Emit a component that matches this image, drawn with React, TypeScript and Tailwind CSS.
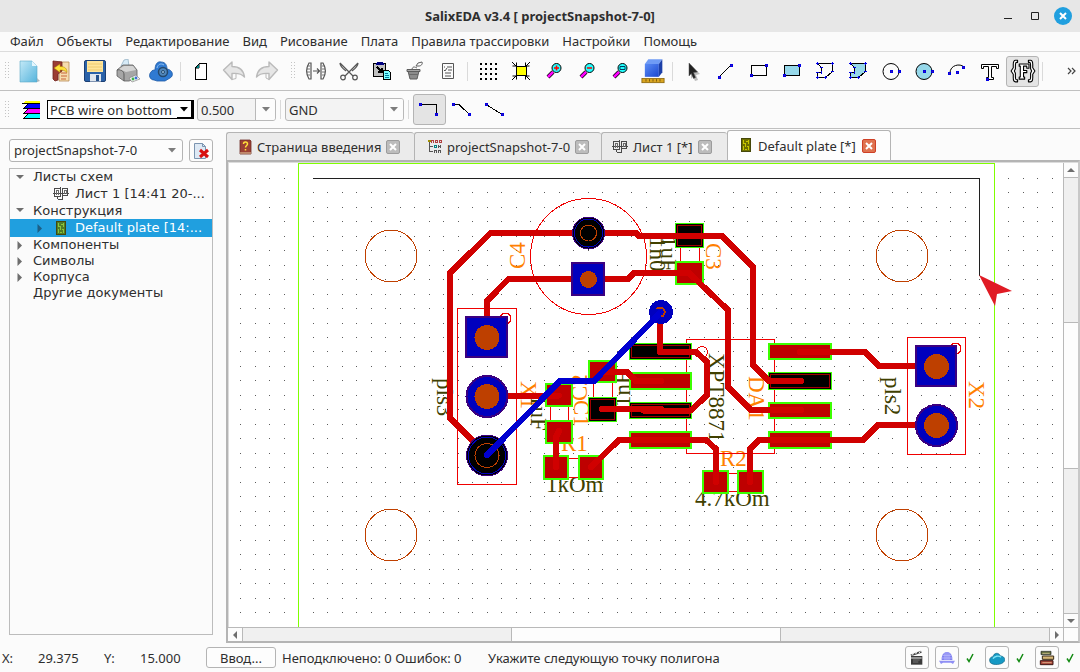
import type { ReactNode } from "react";

const menu = [
  "Файл",
  "Объекты",
  "Редактирование",
  "Вид",
  "Рисование",
  "Плата",
  "Правила трассировки",
  "Настройки",
  "Помощь",
];

function Icon({ children, size = 24 }: { children: ReactNode; size?: number }) {
  return (
    <svg
      width={size}
      height={size}
      viewBox="0 0 24 24"
      fill="none"
      aria-hidden="true"
      className="shrink-0"
    >
      {children}
    </svg>
  );
}

// blue square handle used by the drawing tools
function Node({ x, y }: { x: number; y: number }) {
  return (
    <g shapeRendering="crispEdges">
      <rect x={x - 1} y={y - 1} width="3" height="3" fill="#0000e6" />
      <rect x={x} y={y} width="1" height="1" fill="#5a1090" />
    </g>
  );
}

const newFile = (
  <Icon>
    <path d="M3 2h12l5 5v16H3z" fill="url(#gFile)" stroke="#5aa7c8" strokeWidth=".6" />
    <path d="M15 2v5h5z" fill="#e4f6fd" />
    <path d="M20 19l3 3-3 1z" fill="#a9b8bd" />
  </Icon>
);

const openBook = (
  <Icon>
    <path d="M9 3h10v19H9z" fill="#f6dcae" stroke="#b98a55" strokeWidth=".8" />
    <path d="M3 2l9 1v9l-4 3v6l-3 1-2-2z" fill="#9b3c33" stroke="#6f221d" strokeWidth=".8" />
    <path d="M11 14h6M11 17h6M11 20h5" stroke="#c8663a" />
    <path d="M4 9l6-4v2.500c5 0 7 2 7 6-2-2-4-2.500-7-2.500v2.500z" fill="#ffe13a" stroke="#a67c00" strokeWidth=".5" />
  </Icon>
);

const save = (
  <Icon>
    <rect x="1.500" y="1.500" width="21" height="21" rx="1.500" fill="#2b62a8" stroke="#1c3f73" />
    <rect x="4" y="2" width="16" height="11" fill="#ffe59a" />
    <path d="M5 5h14M5 8h14M5 11h14" stroke="#eecb70" />
    <rect x="7" y="15" width="11" height="7.500" fill="#dfe6ee" />
    <rect x="13" y="16" width="3" height="6" fill="#24518c" />
  </Icon>
);

const print = (
  <Icon>
    <path d="M5 7L8 1l4-1 1 7z" fill="#d7ebf8" stroke="#8aa9bd" strokeWidth=".7" />
    <path d="M1 11l6-5 10 0 4 5v8l-8 3H8l-7-5z" fill="#a6a6a6" stroke="#5c5c5c" strokeWidth=".8" />
    <path d="M1 11c4-1 7 1 7 5v6" stroke="#5c5c5c" />
    <path d="M3 10l5-3 9 0 3 4-10 2z" fill="#d4d4d4" />
    <path d="M13 19l7-3 4 4-8 3z" fill="#f3f3f3" stroke="#777" strokeWidth=".6" />
    <circle cx="17" cy="20" r="1.400" fill="#3db54a" />
    <circle cx="20" cy="19" r="1.400" fill="#3b6fd4" />
  </Icon>
);

const cloud = (
  <Icon>
    <path
      d="M5 21C1 21-1 16 2 13c1-2 3-2 4-2 0-5 2-9 6-8 5 0 6 4 6 7 6 1 7 7 3 9l-5 3H8z"
      fill="#2f7ad2"
      stroke="#1f5ba6"
      strokeWidth=".8"
    />
    <path d="M8 9c1-4 4-5 7-3" stroke="#8fc0f2" />
    <circle cx="14" cy="13" r="4.500" fill="#4f87bd" stroke="#24496e" strokeWidth="1.500" />
    <circle cx="14" cy="13" r="1.500" fill="#9cc4e6" stroke="#24496e" />
  </Icon>
);

const blankPage = (
  <Icon>
    <g shapeRendering="crispEdges">
      <path d="M10.500 4.500h7v16h-11v-12z" fill="#fff" stroke="#000" />
      <path d="M7 8l3-3v4H7z" fill="#008080" stroke="#000" strokeWidth=".5" />
    </g>
  </Icon>
);

const undo = (
  <Icon>
    <path
      d="M1.500 11L10 3v4.500c7 0 11.500 3.500 12.500 10.500-3-3.500-7-4-12.500-3.500v6z"
      fill="#e6e6e6"
      stroke="#bababa"
      strokeWidth="1.400"
      strokeLinejoin="round"
    />
    <path d="M10 20.500l4-1v-5" stroke="#bababa" />
  </Icon>
);

const redo = (
  <Icon>
    <path
      d="M22.500 11L14 3v4.500C7 7.500 2.500 11 1.500 18c3-3.500 7-4 12.500-3.500v6z"
      fill="#e6e6e6"
      stroke="#bababa"
      strokeWidth="1.400"
      strokeLinejoin="round"
    />
    <path d="M14 20.500l-3-1.500v-4" stroke="#bababa" />
  </Icon>
);

const mirror = (
  <Icon>
    <g stroke="#555" strokeWidth="1.200">
      <path d="M7 4v16H5C2 15 2 9 5 4zM17 4v16h2c3-5 3-11 0-16z" />
      <path d="M3 7h3M3 10h3M3 13h3M3 16h3M18 7h3M18 10h3M18 13h3M18 16h3" strokeWidth=".8" />
      <path d="M9 12h6M13 9.500l2.500 2.500-2.500 2.500" />
    </g>
  </Icon>
);

const cut = (
  <Icon>
    <g stroke="#555" strokeWidth="1.200">
      <path d="M3 4l13 13M21 4L8 17M3 4c0 3 2 5 6 8M21 4c0 3-2 5-6 8" />
      <circle cx="6" cy="18.500" r="2.300" />
      <circle cx="18" cy="18.500" r="2.300" />
    </g>
  </Icon>
);

const paste = (
  <Icon>
    <g shapeRendering="crispEdges">
      <rect x="3.500" y="4.500" width="12" height="13" fill="#c0c0c0" stroke="#000" />
      <path d="M6 5V4h1V3h5v1h1v1z" fill="#000080" stroke="#000080" />
      <path d="M7 8l5 5M12 9v4H8" stroke="#000" strokeWidth="1.500" />
      <path d="M13.500 11.500h5l2 2v7h-7z" fill="#7fffff" stroke="#000" />
      <path d="M15 14h3M15 16h4M15 18h4" stroke="#0080a0" />
    </g>
  </Icon>
);

const bucket = (
  <Icon>
    <path d="M5 12h11l-2 8H7z" fill="#8c8c8c" stroke="#5d5d5d" />
    <path d="M4 10.500h13v2H4z" fill="#a8a8a8" stroke="#5d5d5d" />
    <path d="M9 10c1-3 3-2 5-1M13 7l2-3 4-1c1 2-1 4-3 4z" stroke="#5d5d5d" />
    <path d="M6 15.500h9" stroke="#6a6a6a" />
  </Icon>
);

const checklist = (
  <Icon>
    <g stroke="#555">
      <path d="M6.500 4.500h11v15h-11z" />
      <path d="M8 8h1M8 11l1 1 2-3M11 8h5M12 11h4M9 14h6M9 17h6" />
    </g>
  </Icon>
);

const gridDots = (
  <Icon>
    <path
      d="M4 5h2M9 5h2M14 5h2M19 5h2M4 10h2M9 10h2M14 10h2M19 10h2M4 15h2M9 15h2M14 15h2M19 15h2M4 20h2M9 20h2M14 20h2M19 20h2"
      stroke="#000"
      strokeWidth="2"
      shapeRendering="crispEdges"
    />
  </Icon>
);

const fit = (
  <Icon>
    <g stroke="#000">
      <path d="M3 3l4 4M21 3l-4 4M3 21l4-4M21 21l-4-4M3.500 7h4V3.500M20.500 7h-4V3.500M3.500 17h4v3.500M20.500 17h-4v3.500" />
      <rect x="7.500" y="7.500" width="10" height="9" fill="#ff0" />
    </g>
  </Icon>
);

function Lens({ mark }: { mark: ReactNode }) {
  return (
    <Icon>
      <path d="M6 18l5-5" stroke="#000" strokeWidth="4" />
      <path d="M6 18l5-5" stroke="#f0f" strokeWidth="2.500" />
      <circle cx="14.500" cy="9" r="4.500" fill="#2ff" stroke="#000" />
      {mark}
    </Icon>
  );
}

const cube = (
  <Icon size={28}>
    <path d="M5 6l3-4h12l-3 4z" fill="#6f9bf5" />
    <path d="M5 6h12v11H5z" fill="url(#gCube)" />
    <path d="M17 6l3-4v11l-3 4z" fill="#1c3fa8" />
    <rect x="2.500" y="18.500" width="19" height="3.500" fill="#d9a520" stroke="#8a6408" strokeWidth=".7" />
    <path d="M6 19v2M9 19v2M12 19v2M15 19v2M18 19v2" stroke="#6b4d05" strokeWidth=".7" />
  </Icon>
);

const arrowTool = (
  <Icon>
    <path d="M10 6l9 9-4 1 2 5-3 1-2-5-2 3z" fill="#bbb" />
    <path d="M8 4l8.500 9-4 .5 2 5-2 1-2.200-5L8 17z" fill="#222" stroke="#555" strokeWidth=".5" />
  </Icon>
);

const lineTool = (
  <Icon>
    <path d="M5 18L17 6" stroke="#000" shapeRendering="crispEdges" />
    <Node x={5} y={18} />
    <Node x={17} y={6} />
  </Icon>
);

function RectTool({ fill }: { fill?: string }) {
  return (
    <Icon>
      <rect x="4.500" y="6.500" width="15" height="10" fill={fill ?? "none"} stroke="#000" shapeRendering="crispEdges" />
      <Node x={4} y={16} />
      <Node x={19} y={6} />
    </Icon>
  );
}

function PolyTool({ fill }: { fill?: string }) {
  return (
    <Icon>
      <path
        d="M4.500 4.500h15v8l-7 6h-8v-5h4v-5z"
        fill={fill ?? "none"}
        stroke="#000"
        shapeRendering="crispEdges"
      />
      <path
        d="M3 4.500h3M4.500 3v3M18 4.500h3M19.500 3v3M18 12h3M12.500 17v3M11 18.500h3M3 18.500h3M4.500 17v3M3 13.500h3M8.500 12v3M7 8.500h3"
        stroke="#0000e6"
        shapeRendering="crispEdges"
      />
    </Icon>
  );
}

function CircleTool({ fill }: { fill?: string }) {
  return (
    <Icon>
      <circle cx="12" cy="12.500" r="8" fill={fill ?? "none"} stroke="#000" />
      <Node x={12} y={12} />
      <Node x={20} y={12} />
    </Icon>
  );
}

const arcTool = (
  <Icon>
    <path d="M5 14c0-8 10-10 14-6" stroke="#000" />
    <Node x={4} y={14} />
    <Node x={12} y={13} />
    <Node x={18} y={8} />
  </Icon>
);

const textTool = (
  <Icon>
    <path d="M3.500 5.500h17v4h-2v-2h-5v11h2v2h-7v-2h2v-11h-5v2h-2z" fill="#fff" stroke="#000" />
    <Node x={9} y={20} />
  </Icon>
);

const fieldTool = (
  <Icon size={26}>
    <g stroke="#000" fill="#fff" strokeLinejoin="round">
      <path d="M7 2H5C3 2 3 4 3 6v3l-2 3 2 3v3c0 2 0 4 2 4h2v-2H6c-1 0-1-1-1-3v-3l-1-2 1-2V7c0-2 0-3 1-3h1z" />
      <path d="M17 2h2c2 0 2 2 2 4v3l2 3-2 3v3c0 2 0 4-2 4h-2v-2h1c1 0 1-1 1-3v-3l1-2-1-2V7c0-2 0-3-1-3h-1z" />
      <path d="M8.500 5.500h9v4h-2v-2h-3v4h3v2h-3v4h1v2h-5v-2h1v-10h-1z" />
    </g>
  </Icon>
);

const magPlus = <path d="M12 9h5M14.500 6.500v5" stroke="#f00" strokeWidth="1.500" />;
const magMinus = <path d="M12 9h5" stroke="#f00" strokeWidth="1.500" />;
const magRect = <path d="M12 7.500h5v3h-5z" stroke="#004060" />;

type Tool = { label: string; icon: ReactNode; on?: boolean } | "sep" | "grip";

const tools: Tool[] = [
  { label: "Новый", icon: newFile },
  { label: "Открыть", icon: openBook },
  { label: "Сохранить", icon: save },
  { label: "Печать", icon: print },
  { label: "Облако", icon: cloud },
  "sep",
  { label: "Страница", icon: blankPage },
  { label: "Отменить", icon: undo },
  { label: "Повторить", icon: redo },
  "grip",
  { label: "Отразить", icon: mirror },
  { label: "Вырезать", icon: cut },
  { label: "Вставить", icon: paste },
  { label: "Очистить", icon: bucket },
  { label: "Свойства", icon: checklist },
  "sep",
  { label: "Сетка", icon: gridDots },
  { label: "Вписать", icon: fit },
  { label: "Увеличить", icon: <Lens mark={magPlus} /> },
  { label: "Уменьшить", icon: <Lens mark={magMinus} /> },
  { label: "Область", icon: <Lens mark={magRect} /> },
  { label: "3D вид", icon: cube },
  "sep",
  { label: "Выбор", icon: arrowTool },
  { label: "Линия", icon: lineTool },
  { label: "Прямоугольник", icon: <RectTool /> },
  { label: "Закрашенный прямоугольник", icon: <RectTool fill="#96d8ea" /> },
  { label: "Полигон", icon: <PolyTool /> },
  { label: "Закрашенный полигон", icon: <PolyTool fill="#96d8ea" /> },
  { label: "Окружность", icon: <CircleTool /> },
  { label: "Круг", icon: <CircleTool fill="#96d8ea" /> },
  { label: "Дуга", icon: arcTool },
  { label: "Текст", icon: textTool },
  { label: "Поле", icon: fieldTool, on: true },
  "sep",
];

function Grip() {
  return (
    <svg width="5" height="18" aria-hidden="true" className="shrink-0" shapeRendering="crispEdges">
      <path d="M.5 0v18M3.500 0v18" stroke="#c4c4c4" strokeDasharray="1 2" />
    </svg>
  );
}

function ToolButton({ label, icon, on }: { label: string; icon: ReactNode; on?: boolean }) {
  return (
    <button
      type="button"
      aria-label={label}
      aria-pressed={on}
      className={
        on
          ? "flex h-[31px] w-[33px] shrink-0 items-center justify-center rounded-[3px] border border-[#b4b4b4] bg-[#e4e4e4]"
          : "flex h-[31px] w-[33px] shrink-0 items-center justify-center"
      }
    >
      {icon}
    </button>
  );
}

function Down() {
  return (
    <svg width="8" height="5" viewBox="0 0 8 5" aria-hidden="true" className="shrink-0">
      <path d="M0 0h8L4 4.500z" fill="#7d7d7d" />
    </svg>
  );
}

function EditCombo({ label, value, className }: { label: string; value: string; className: string }) {
  return (
    <div className={`flex h-[23px] overflow-hidden rounded-[3px] border border-[#b9b9b9] bg-[#f3f3f3] ${className}`}>
      <input aria-label={label} defaultValue={value} className="min-w-0 flex-1 bg-transparent px-[3px] outline-none" />
      <button
        type="button"
        aria-label="Список"
        className="flex w-[20px] items-center justify-center border-l border-[#b9b9b9] bg-[#fcfcfc]"
      >
        <Down />
      </button>
    </div>
  );
}

const wires = [
  { label: "Под прямым углом", d: "M2 6.500h16.500V17", ends: [[2, 6], [18, 16]], on: true },
  { label: "Под углом 45", d: "M2 6.500h6L19 17", ends: [[2, 6], [18, 16]] },
  { label: "Произвольно", d: "M2 6.500L19 17", ends: [[2, 6], [18, 16]] },
];

function SheetIcon() {
  return (
    <svg
      width="16"
      height="15"
      viewBox="0 0 16 15"
      fill="none"
      stroke="#4a4a4a"
      aria-hidden="true"
      className="shrink-0"
      shapeRendering="crispEdges"
    >
      <path d="M1.500 2.500h6v8h-6zM9.500 2.500h5v7h-5zM0 7.500h16M7.500 3V.500M4.500 10v3M4.500 13.500h5M9.500 13v-3" />
      <path d="M3.500 5v4M5.500 5v4M3 4.500h3M11.500 5v3M13.500 5v3M11 4.500h3" stroke="#6a6a6a" />
    </svg>
  );
}

function PlateIcon({ color, base }: { color: string; base: string }) {
  return (
    <svg
      width="11"
      height="15"
      viewBox="0 0 11 15"
      fill="none"
      aria-hidden="true"
      className="shrink-0"
      shapeRendering="crispEdges"
    >
      <rect x=".5" y=".5" width="9" height="13" fill={base} stroke="#45480a" />
      <path d="M2.500 2v4M2 5.500h3M4.500 5v4M7.500 2v4M5 3.500h2M2.500 8v4M7.500 8v4M4 11.500h2M6 8.500h2" stroke={color} />
    </svg>
  );
}

function HelpIcon() {
  return (
    <svg width="13" height="16" viewBox="0 0 13 16" fill="none" aria-hidden="true" className="shrink-0">
      <path d="M1 1h10l1 1v13H1z" fill="#9c4034" stroke="#6c2b23" strokeWidth=".8" />
      <path d="M1 14h11" stroke="#e8d2a5" />
      <path d="M4.500 5c0-3 4-2.500 4 0 0 1.500-2 1.500-2 3.500M6.500 10v1.500" stroke="#ffe13a" strokeWidth="1.500" />
    </svg>
  );
}

function ProjectIcon() {
  return (
    <svg
      width="15"
      height="15"
      viewBox="0 0 15 15"
      fill="none"
      aria-hidden="true"
      className="shrink-0"
      shapeRendering="crispEdges"
    >
      <path d="M2.500 3v10M3 7.500h3M3 12.500h3" stroke="#555" />
      <path d="M4.500 4V1.500h2V4M8.500 4V1.500h2v2h-2M12.500 1.500h2v2h-2z" stroke="#b04040" />
      <path d="M7.500 6.500h2v2h-2z" stroke="#008080" />
      <path d="M11.500 6v3M13.500 6v3M11.500 7.500h2" stroke="#555" />
      <path d="M7.500 14v-2.500h2V14M11.500 14v-2.500h2V14" stroke="#555" />
      <path d="M1 1h3v2H1z" fill="#a09000" />
    </svg>
  );
}

const tabs = [
  { title: "Страница введения", icon: <HelpIcon />, className: "w-[188px] pl-[12px]" },
  { title: "projectSnapshot-7-0", icon: <ProjectIcon />, className: "w-[187px] pl-[12px]" },
  { title: "Лист 1 [*]", icon: <SheetIcon />, className: "w-[126px] pl-[10px]" },
];

function CloseTab({ active }: { active?: boolean }) {
  return (
    <button
      type="button"
      aria-label="Закрыть вкладку"
      className={
        active
          ? "flex h-[14px] w-[14px] shrink-0 items-center justify-center rounded-[2px] border border-[#cf4026] bg-[#df7350]"
          : "flex h-[14px] w-[14px] shrink-0 items-center justify-center rounded-[2px] border border-[#9c9c9c] bg-[#bcbcbc]"
      }
    >
      <svg width="8" height="8" viewBox="0 0 8 8" aria-hidden="true">
        <path d="M1 1l6 6M7 1L1 7" stroke="#fff" strokeWidth="2" />
      </svg>
    </button>
  );
}

const RED = "#d00000";

const traces = [
  "M588 233H490.500L450 273V418L487 455",
  "M588 233H636L639 236H722L753 267V365L769 381H801",
  "M588 279H508.500L487 301V337",
  "M588 279H628L634 273H689L728 310V387L751 410H801",
  "M487 395.500H559",
  "M559 431L556 437V467",
  "M602 372H627L636 381H661",
  "M602 409H661",
  "M643 410.500H691L707 395V362L696 352H660V312",
  "M591 467L619 440H706L716 449V482",
  "M750 482V449L759 440H863L878 425H936",
  "M800 352H865L879 366H936",
];

// x, y, width, height, filled with copper or masked
const pads: [number, number, number, number, boolean][] = [
  [629, 343, 63, 17, false],
  [629, 372, 63, 18, true],
  [629, 402, 63, 17, false],
  [629, 431, 63, 18, true],
  [768, 343, 64, 17, true],
  [768, 372, 64, 18, false],
  [768, 402, 64, 17, true],
  [768, 431, 64, 18, true],
  [675, 223, 29, 25, false],
  [675, 261, 29, 24, true],
  [588, 360, 29, 23, true],
  [588, 397, 29, 25, false],
  [545, 383, 28, 24, true],
  [545, 420, 28, 24, true],
  [543, 455, 26, 25, true],
  [578, 455, 26, 25, true],
  [702, 470, 27, 24, true],
  [737, 470, 27, 24, true],
];

// text, x, y, angle, layer colour
const marks: [string, number, number, number, string][] = [
  ["C4", 525, 269, -90, "#ff8000"],
  ["C3", 706, 243, 90, "#ff8000"],
  ["DA1", 749, 376, 90, "#ff8000"],
  ["X2", 969, 381, 90, "#ff8000"],
  ["X1", 521, 381, 90, "#ff8000"],
  ["C2", 587, 401, -90, "#ff8000"],
  ["C1", 574, 400, 90, "#ff8000"],
  ["R1", 561, 451, 0, "#ff8000"],
  ["R2", 720, 466, 0, "#ff8000"],
  ["XPT8871", 709, 353, 90, "#404000"],
  ["pls2", 885, 377, 90, "#404000"],
  ["pls3", 437, 378, 90, "#404000"],
  ["1uF", 531, 395, 90, "#404000"],
  ["1nF", 630, 407, -90, "#404000"],
  ["1n0", 650, 237, 90, "#404000"],
  ["1uF", 661, 236, 90, "#404000"],
  ["1kOm", 546, 492, 0, "#404000"],
  ["4.7kOm", 695, 506, 0, "#404000"],
];

let dots = "";
for (let i = 0; i < 140; i++) {
  for (let j = 0; j < 80; j++) {
    dots += `M${Math.round(240.2 + 14.49 * i)} ${Math.round(177.6 + 14.49 * j)}h1v1h-1z`;
  }
}

function Board() {
  return (
    <svg
      role="img"
      aria-label="Печатная плата"
      className="absolute inset-0 h-full w-full"
      fill="none"
      shapeRendering="crispEdges"
    >
      <g transform="translate(-229 -163)">
        <path d={dots} fill="#5c5c5c" />
        <path d="M298.500 2000V163.500H994.500V2000" stroke="#80ff00" />
        <path d="M313 178.500H979.500V276" stroke="#202020" />

        <g stroke="#c04000">
          <circle cx="391" cy="256" r="26" />
          <circle cx="902" cy="256" r="26" />
          <circle cx="391" cy="535" r="26" />
          <circle cx="902" cy="535" r="26" />
        </g>

        <g fontFamily="'Liberation Serif', serif" fontSize="23">
          {marks.map(([text, x, y, angle, color]) => (
            <text key={text + x} transform={`translate(${x} ${y}) rotate(${angle})`} fill={color}>
              {text}
            </text>
          ))}
        </g>

        <g stroke="#f00000">
          <circle cx="588.5" cy="256.5" r="58" />
          <rect x="457.5" y="308.5" width="59" height="176" />
          <rect x="907.5" y="337.5" width="58" height="117" />
          <rect x="686.5" y="339.5" width="88" height="114" />
          <circle cx="505.5" cy="318.5" r="5.500" />
          <circle cx="955.5" cy="348.5" r="5.500" />
          <circle cx="702" cy="352" r="5.500" />
          <path d="M680.500 247v15M699.500 247v15M593.500 382v16M612.500 382v16M550.500 406v15M568.500 406v15" />
          <path d="M568 458.500h11M568 477.500h11M728 473.500h10M728 491.500h10" />
        </g>

        {pads.map(([x, y, w, h, copper]) => (
          <g key={`${x}-${y}`}>
            {copper ? (
              <rect x={x + 1} y={y + 1} width={w - 2} height={h - 2} fill="#be0000" stroke="#3cff00" strokeWidth="2" />
            ) : (
              <>
                <rect x={x + 0.5} y={y + 0.5} width={w - 1} height={h - 1} fill="#000" stroke="#3cff00" />
                <rect x={x + 2.5} y={y + 2.5} width={w - 5} height={h - 5} stroke="#a00000" />
              </>
            )}
          </g>
        ))}

        <g stroke={RED} strokeWidth="6" strokeLinecap="round" strokeLinejoin="round">
          {traces.map((d) => (
            <path key={d} d={d} />
          ))}
        </g>

        <g fill="#0000be" stroke="#3c0080" strokeWidth="2">
          <rect x="466" y="317" width="41" height="40" />
          <circle cx="487" cy="396.5" r="20.500" />
          <rect x="572" y="263" width="32" height="32" />
          <rect x="916" y="346" width="40" height="40" />
          <circle cx="936.5" cy="425.5" r="20.500" />
        </g>
        <g fill="#be4000">
          <circle cx="487" cy="337.5" r="12.500" />
          <circle cx="487" cy="396.5" r="12.500" />
          <circle cx="588.5" cy="279.5" r="8.500" />
          <circle cx="936.5" cy="366.5" r="12.500" />
          <circle cx="936.5" cy="425.5" r="12.500" />
        </g>

        <circle cx="487" cy="455.500" r="20.500" fill="#000" stroke="#3c0080" />
        <circle cx="487" cy="455.500" r="18.500" stroke="#0000be" />
        <circle cx="487" cy="455.500" r="12" stroke="#be4000" />
        <circle cx="588.500" cy="233" r="16" fill="#000" stroke="#3c0080" />
        <circle cx="588.500" cy="233" r="14" stroke="#0000be" />
        <circle cx="588.500" cy="233" r="8" stroke="#be4000" />

        <circle cx="661" cy="312" r="12" fill="#0000be" />
        <path
          d="M487 455L560 381H594L661 312"
          stroke="#0000d0"
          strokeWidth="6"
          strokeLinecap="round"
          strokeLinejoin="round"
        />
        <path d="M657 309a4.500 4.500 0 1 1 4 7.500" stroke="#be4000" strokeWidth="2" />

        <path d="M979 275L1012 291L997 294L995 306Z" fill="#e01b24" shapeRendering="geometricPrecision" />
      </g>
    </svg>
  );
}

const triangles = {
  up: "M0 6h8L4 2z",
  down: "M0 2h8L4 6z",
  left: "M6 0v8L2 4z",
  right: "M2 0v8l4-4z",
};

function ScrollArrow({ dir, className }: { dir: keyof typeof triangles; className: string }) {
  return (
    <button type="button" aria-label="Прокрутка" className={`flex shrink-0 items-center justify-center bg-[#fcfcfc] ${className}`}>
      <svg width="8" height="8" viewBox="0 0 8 8" aria-hidden="true">
        <path d={triangles[dir]} fill="#6e6e6e" />
      </svg>
    </button>
  );
}

type TreeRow = { text: string; pad: string; open?: boolean; leaf?: boolean; icon?: ReactNode; on?: boolean };

const tree: TreeRow[] = [
  { text: "Листы схем", pad: "h-[16px] pl-[5px]", open: true },
  { text: "Лист 1 [14:41 20-...", pad: "h-[17px] pl-[25px]", leaf: true, icon: <SheetIcon /> },
  { text: "Конструкция", pad: "h-[17px] pl-[5px]", open: true },
  {
    text: "Default plate [14:...",
    pad: "h-[18px] pl-[25px] bg-[#209fdf] text-white",
    icon: <PlateIcon color="#8cc43c" base="#4f7d28" />,
    on: true,
  },
  { text: "Компоненты", pad: "h-[16px] pl-[5px]" },
  { text: "Символы", pad: "h-[16px] pl-[5px]" },
  { text: "Корпуса", pad: "h-[16px] pl-[5px]" },
  { text: "Другие документы", pad: "h-[16px] pl-[5px]", leaf: true },
];

function Sidebar() {
  return (
    <aside className="flex w-[226px] shrink-0 flex-col pt-[10px] pr-[13px] pb-2 pl-[9px]">
      <div className="flex gap-[6px]">
        <div className="relative flex flex-1">
          <select
            aria-label="Проект"
            className="h-[23px] w-full appearance-none rounded-[3px] border border-[#b4b4b4] bg-[#fcfcfc] pb-px pl-1 outline-none"
          >
            <option>projectSnapshot-7-0</option>
          </select>
          <span className="pointer-events-none absolute top-[9px] right-[7px] flex">
            <Down />
          </span>
        </div>
        <button
          type="button"
          aria-label="Закрыть проект"
          className="flex h-[23px] w-[24px] items-center justify-center rounded-[3px] border border-[#b4b4b4] bg-[#fcfcfc]"
        >
          <svg width="18" height="18" viewBox="0 0 18 18" fill="none" aria-hidden="true">
            <path d="M2.500 1.500h8l3 3v12h-11z" fill="#dde9f5" stroke="#7b94b0" />
            <path d="M10.500 1.500v3h3" stroke="#7b94b0" />
            <path d="M8 8l8 7M16 8l-8 7" stroke="#d81010" strokeWidth="3" />
          </svg>
        </button>
      </div>
      <ul
        role="tree"
        aria-label="Проект"
        className="mt-[6px] flex-1 overflow-hidden border border-[#bcbcbc] font-['DejaVu_Sans',sans-serif] text-[13px]"
      >
        {tree.map((row) => (
          <li key={row.text} role="treeitem" aria-expanded={row.open} aria-selected={!!row.on} className={`flex items-center ${row.pad}`}>
            <span className="flex w-[18px] shrink-0 items-center">
              {!row.leaf && (
                <svg width="9" height="9" viewBox="0 0 9 9" aria-hidden="true">
                  <path d={row.open ? "M1 2h8L5 6z" : "M2.500 0v9L7 4.500z"} fill={row.on ? "#1c5f86" : "#6e6e6e"} />
                </svg>
              )}
            </span>
            {row.icon && <span className="flex w-[22px] shrink-0 justify-center pr-[6px]">{row.icon}</span>}
            <span className="leading-4 whitespace-nowrap">{row.text}</span>
          </li>
        ))}
      </ul>
    </aside>
  );
}

function Editor() {
  return (
    <main className="flex min-w-0 flex-1 flex-col pt-px">
      <div role="tablist" className="flex items-end">
        {tabs.map((tab) => (
          <div
            key={tab.title}
            role="tab"
            aria-selected={false}
            className={`flex h-[28px] shrink-0 items-center gap-[5px] rounded-t-[3px] border border-r-0 border-b-0 border-[#b4b4b4] bg-[#ebebeb] whitespace-nowrap ${tab.className}`}
          >
            {tab.icon}
            {tab.title}
            <CloseTab />
          </div>
        ))}
        <div
          role="tab"
          aria-selected
          className="flex h-[30px] w-[164px] shrink-0 items-center gap-[6px] rounded-t-[3px] border border-b-0 border-[#b4b4b4] bg-[#fdfdfd] pl-[13px] whitespace-nowrap"
        >
          <PlateIcon color="#c8c800" base="#6e7000" />
          Default plate [*]
          <CloseTab active />
        </div>
      </div>

      <div className="flex min-h-0 flex-1 flex-col border-2 border-[#b4b4b4] border-r-[#c8c8c8]">
        <div className="flex min-h-0 flex-1 border-t border-l border-[#dcdcdc] bg-white">
          <div className="relative min-w-0 flex-1 overflow-hidden">
            <Board />
          </div>
          <div className="flex w-[15px] shrink-0 flex-col border-l border-[#b9b9b9] bg-[#f0f0f0]">
            <ScrollArrow dir="up" className="h-[15px] border-b border-[#b9b9b9]" />
            <div className="grow-[145]" />
            <div className="grow-[146] border-y border-[#b9b9b9] bg-[#fdfdfd]" />
            <div className="grow-[145]" />
            <ScrollArrow dir="down" className="h-[14px] border-t border-[#b9b9b9]" />
          </div>
        </div>
        <div className="flex h-[14px] shrink-0 border-t border-[#b9b9b9] bg-[#f0f0f0]">
          <ScrollArrow dir="left" className="w-[15px] border-r border-[#b9b9b9]" />
          <div className="grow-[269]" />
          <div className="grow-[269] border-x border-[#b9b9b9] bg-[#fdfdfd]" />
          <div className="grow-[269]" />
          <ScrollArrow dir="right" className="w-[14px] border-l border-[#b9b9b9]" />
          <div className="w-[15px] shrink-0 border-l border-[#b9b9b9] bg-[#fcfcfc]" />
        </div>
      </div>
    </main>
  );
}

const services = [
  {
    label: "Видео",
    icon: (
      <>
        <path d="M3 9h17v13H3z" fill="#3a3a3a" />
        <path d="M2 7l16-6 1 3L4 9z" fill="#444" />
        <path d="M5 8l2-4M10 6l2-4M15 5l2-3M3 12h16" stroke="#eee" strokeWidth="1.500" />
        <path d="M6 15h10M6 18h8" stroke="#999" />
      </>
    ),
  },
  {
    label: "Сеть",
    check: true,
    icon: (
      <>
        <path d="M4 15C3-1 21-1 20 15z" fill="#8080f0" />
        <path d="M5 8h14M4 12h16M9 4v11M12 3v12M15 4v11" stroke="#c4c4ff" />
        <path d="M0 16h24l-3 5-3-2H6l-3 2z" fill="#8f8ff5" />
      </>
    ),
  },
  {
    label: "Облачный сервис",
    check: true,
    icon: (
      <>
        <path d="M2 19C-1 13 3 10 6 10c1-6 9-7 11-1 5 0 8 4 6 8-4 6-17 6-21 2z" fill="#1699c4" stroke="#0d6080" />
        <path d="M6 13c2-4 9-5 12-2" stroke="#7fe4f7" strokeWidth="2" />
      </>
    ),
  },
  {
    label: "Библиотека",
    check: true,
    icon: (
      <>
        <path d="M3 2h15v5H3z" fill="#5d6b3a" stroke="#222" />
        <path d="M5 9h17v5H5z" fill="#d8b878" stroke="#3a2a16" strokeWidth="1.500" />
        <path d="M2 16h19v6H2z" fill="#a8443a" stroke="#3a1612" strokeWidth="1.500" />
        <path d="M5 19h14M5 5h11" stroke="#f1d9a9" />
      </>
    ),
  },
];

function StatusBar() {
  return (
    <footer className="flex h-[29px] shrink-0 items-center pl-[2px] whitespace-nowrap">
      <span className="w-[36px]">X:</span>
      <output className="w-[66px]">29.375</output>
      <span className="w-[36px]">Y:</span>
      <output className="w-[66px]">15.000</output>
      <button type="button" className="h-[21px] w-[70px] rounded-[3px] border border-[#b4b4b4] bg-[#fdfdfd] leading-[18px]">
        Ввод...
      </button>
      <span className="ml-[6px] w-[206px]">Неподключено: 0 Ошибок: 0</span>
      <span>Укажите следующую точку полигона</span>
      <div className="ml-auto flex items-center gap-[6px] pr-px">
        {services.map((s) => (
          <div key={s.label} className="flex items-center">
            <button
              type="button"
              aria-label={s.label}
              className="flex h-[23px] w-[24px] items-center justify-center rounded-[3px] border border-[#b4b4b4] bg-[#fcfcfc]"
            >
              <Icon size={16}>{s.icon}</Icon>
            </button>
            {s.check && (
              <svg width="20" height="10" viewBox="0 0 20 10" fill="none" aria-hidden="true">
                <path d="M8 5.500l2 3L14 1" stroke="#128a12" strokeWidth="1.500" />
              </svg>
            )}
          </div>
        ))}
      </div>
    </footer>
  );
}

export default function App() {
  return (
    <div className="flex h-screen flex-col overflow-hidden bg-[#fbfbfb] font-['Noto_Sans',sans-serif] text-[13px] leading-4 text-[#2e2e2e]">
      <svg width="0" height="0" className="absolute" aria-hidden="true">
        <linearGradient id="gFile" x1="0" y1="0" x2="1" y2="1">
          <stop stopColor="#c3e9f7" />
          <stop offset="1" stopColor="#56b4dc" />
        </linearGradient>
        <linearGradient id="gCube" x1="0" y1="0" x2="1" y2="1">
          <stop stopColor="#5b8cf5" />
          <stop offset="1" stopColor="#1b47cf" />
        </linearGradient>
      </svg>

      <header className="flex h-[32px] shrink-0 items-center bg-[#e7e7e7] pr-[8px] pl-[78px]">
        <h1 className="flex-1 text-center text-[13px] font-bold">SalixEDA v3.4 [ projectSnapshot-7-0]</h1>
        <div className="flex items-center gap-[16px] text-[#222]">
          <button type="button" aria-label="Свернуть">
            <svg width="12" height="12" aria-hidden="true">
              <path d="M2 8.500h8" stroke="currentColor" />
            </svg>
          </button>
          <button type="button" aria-label="Развернуть">
            <svg width="10" height="10" aria-hidden="true">
              <path d="M1.500 1.500h7v7h-7z" fill="none" stroke="currentColor" />
            </svg>
          </button>
          <button
            type="button"
            aria-label="Закрыть"
            className="-ml-[2px] flex h-[18px] w-[18px] items-center justify-center rounded-full bg-[#209fdf]"
          >
            <svg width="8" height="8" viewBox="0 0 8 8" aria-hidden="true">
              <path d="M1 1l6 6M7 1L1 7" stroke="#fff" strokeWidth="2" />
            </svg>
          </button>
        </div>
      </header>

      <nav className="flex h-[20px] shrink-0 items-center gap-[13px] border-b border-[#dcdcdc] pb-px pl-[10px] whitespace-nowrap">
        {menu.map((item) => (
          <button type="button" key={item}>
            {item}
          </button>
        ))}
      </nav>

      <div role="toolbar" aria-label="Инструменты" className="flex h-[39px] shrink-0 items-center border-b border-[#c0c0c0] pl-[5px]">
        <Grip />
        <div className="w-[2px]" />
        {tools.map((tool, i) => {
          if (tool === "sep")
            return (
              <span key={i} className="flex w-[7px] shrink-0 justify-center">
                <span className="h-[19px] w-px bg-[#dadada]" />
              </span>
            );
          if (tool === "grip")
            return (
              <span key={i} className="flex w-[16px] shrink-0 justify-end pr-[3px]">
                <Grip />
              </span>
            );
          return <ToolButton key={i} {...tool} />;
        })}
        <button type="button" aria-label="Ещё" className="ml-auto pr-[4px]">
          <svg width="10" height="8" viewBox="0 0 10 8" fill="none" stroke="#444" aria-hidden="true">
            <path d="M2 1l3 3-3 3M6 1l3 3-3 3" strokeWidth="1.200" />
          </svg>
        </button>
      </div>

      <div role="toolbar" aria-label="Слой" className="flex h-[38px] shrink-0 items-center border-b border-[#c0c0c0] pl-[5px]">
        <Grip />
        <svg width="18" height="18" viewBox="0 0 18 18" aria-hidden="true" className="mr-[7px] ml-[12px] shrink-0" shapeRendering="crispEdges">
          <path d="M3 0h15v2H1z" fill="#ff0" />
          <path d="M6 3h12v4H2z" fill="#00f" />
          <path d="M6 8h12v4H2z" fill="#f0f" />
          <path d="M6 13h12v4H2z" fill="#0ff" />
          <path d="M0 2.500h18M1 7.500h17M1 12.500h17M1 17.500h17M2 7l4-4M2 12l4-4M2 17l4-4" stroke="#000" fill="none" />
        </svg>
        <div className="relative flex">
          <select
            aria-label="Слой трассировки"
            className="h-[19px] w-[147px] appearance-none border border-r-2 border-black bg-white pl-[2px] leading-4 outline-none"
          >
            <option>PCB wire on bottom</option>
          </select>
          <span className="pointer-events-none absolute top-[1px] right-[2px] flex h-[17px] w-[15px] items-center justify-center border-r border-b border-black bg-white">
            <svg width="8" height="5" viewBox="0 0 8 5" aria-hidden="true">
              <path d="M0 0h8L4 4.500z" />
            </svg>
          </span>
        </div>
        <EditCombo label="Ширина" value="0.500" className="ml-[3px] w-[79px]" />
        <span className="mx-[4px] h-[19px] w-px bg-[#dadada]" />
        <EditCombo label="Цепь" value="GND" className="w-[119px]" />
        <span className="mx-[4px] h-[19px] w-px bg-[#dadada]" />
        {wires.map((w) => (
          <ToolButton
            key={w.label}
            label={w.label}
            on={w.on}
            icon={
              <Icon>
                <path d={w.d} stroke="#000" shapeRendering="crispEdges" />
                {w.ends.map(([x, y]) => (
                  <Node key={x} x={x} y={y} />
                ))}
              </Icon>
            }
          />
        ))}
      </div>

      <div className="flex min-h-0 flex-1">
        <Sidebar />
        <Editor />
      </div>
      <StatusBar />
    </div>
  );
}
